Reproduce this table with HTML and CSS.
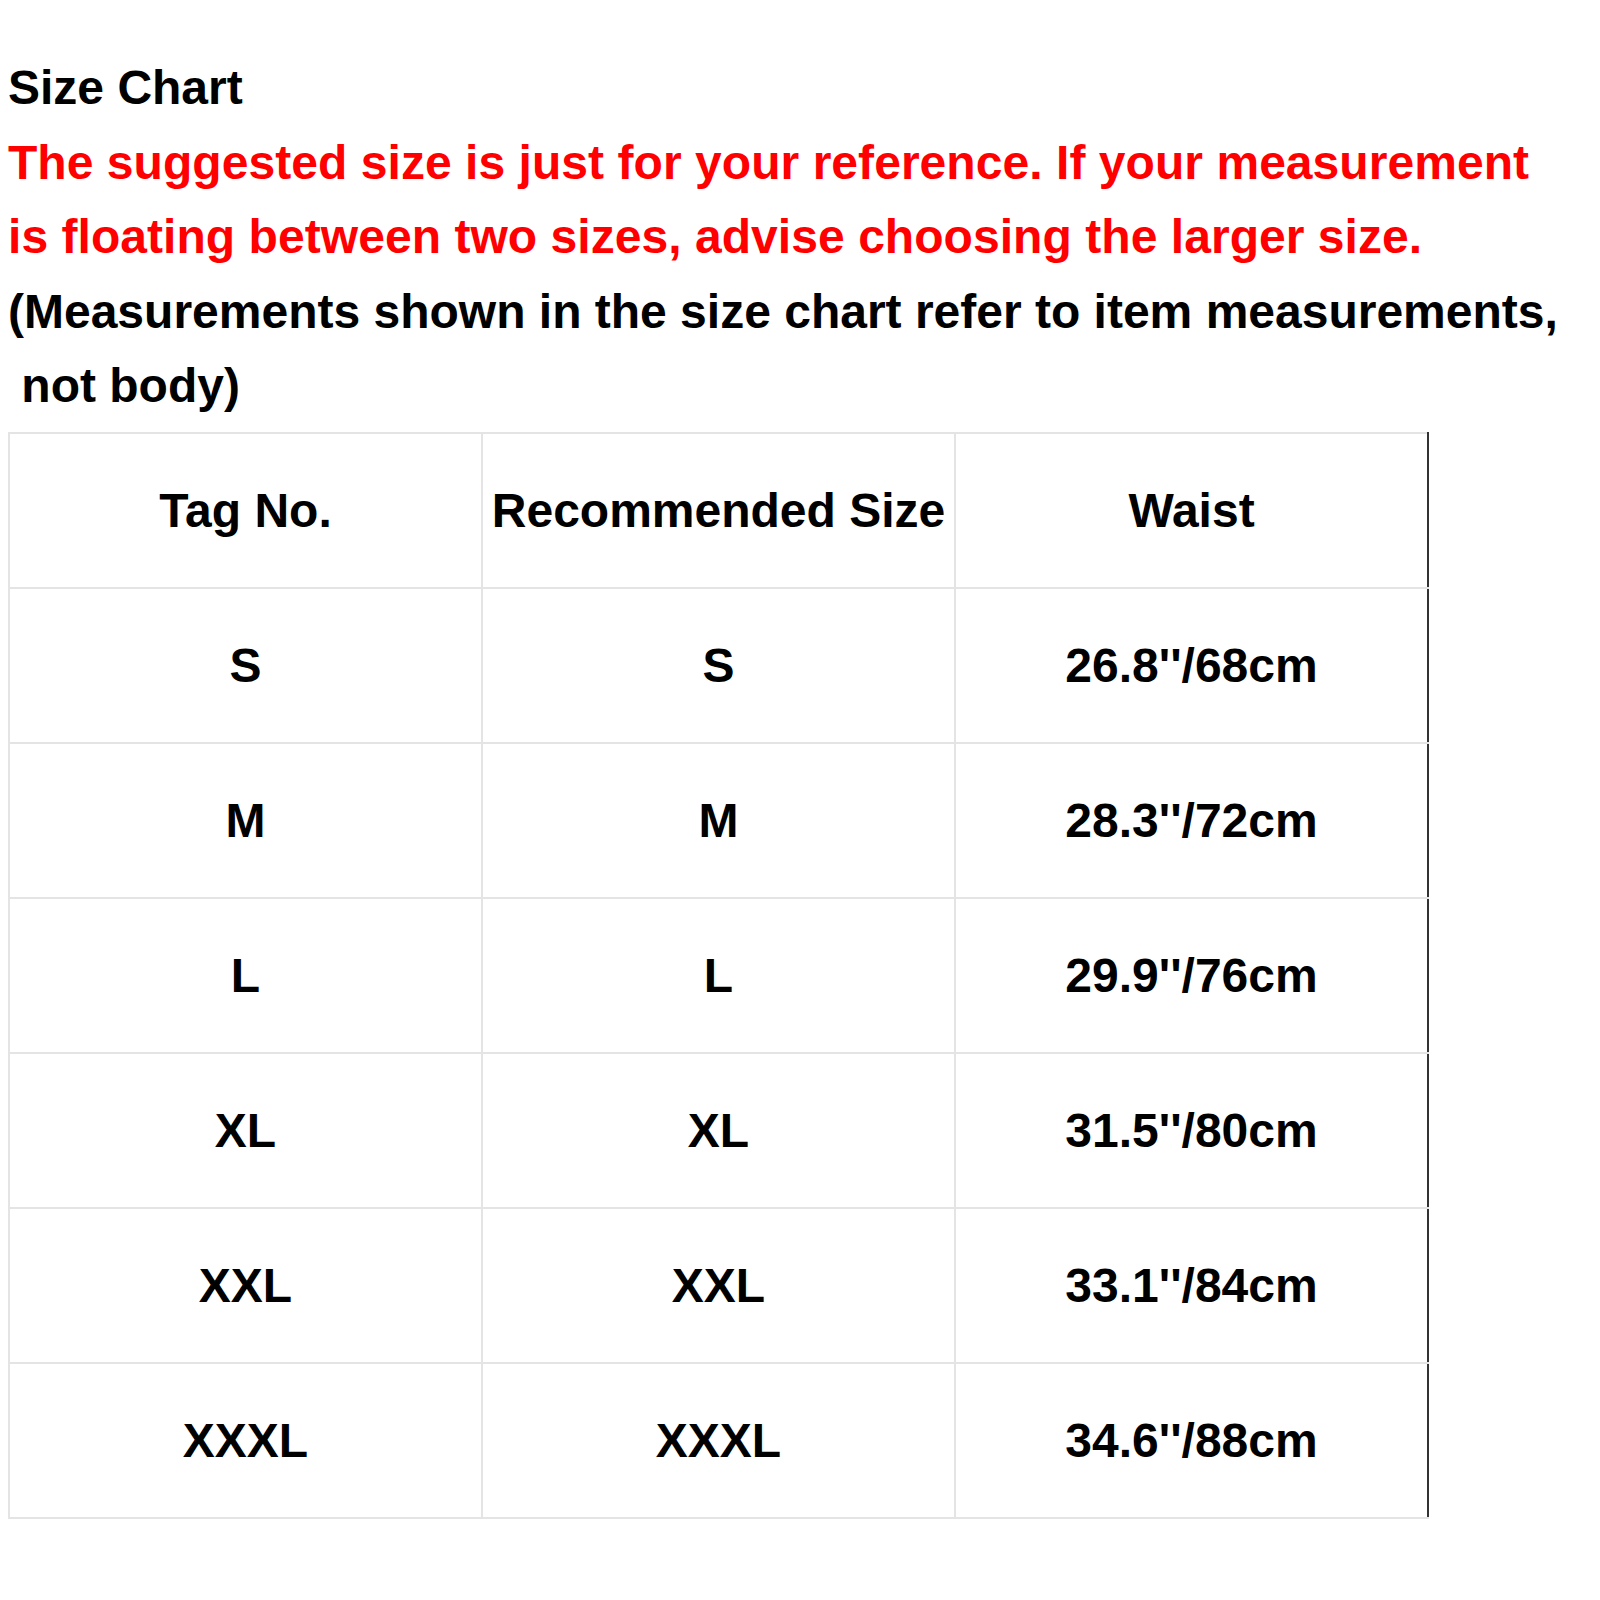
FILE: index.html
```html
<!DOCTYPE html>
<html>
<head>
<meta charset="utf-8">
<link rel="stylesheet" href="styles.css">
</head>
<body>
<div class="intro">
  <div class="line">Size Chart</div>
  <div class="line red">The suggested size is just for your reference. If your measurement</div>
  <div class="line red">is floating between two sizes, advise choosing the larger size.</div>
  <div class="line">(Measurements shown in the size chart refer to item measurements,</div>
  <div class="line">&nbsp;not body)</div>
</div>
<table class="chart">
  <tr><td>Tag No.</td><td>Recommended Size</td><td>Waist</td></tr>
  <tr><td>S</td><td>S</td><td>26.8''/68cm</td></tr>
  <tr><td>M</td><td>M</td><td>28.3''/72cm</td></tr>
  <tr><td>L</td><td>L</td><td>29.9''/76cm</td></tr>
  <tr><td>XL</td><td>XL</td><td>31.5''/80cm</td></tr>
  <tr><td>XXL</td><td>XXL</td><td>33.1''/84cm</td></tr>
  <tr><td>XXXL</td><td>XXXL</td><td>34.6''/88cm</td></tr>
</table>
</body>
</html>
```
FILE: styles.css
```css
html, body {
  background: #ffffff;
}
body {
  margin: 0;
  padding: 51px 8px 0 8px;
  font-family: "Liberation Sans", Arial, sans-serif;
  font-weight: bold;
  color: #000;
}
.intro {
  font-size: 48px;
  line-height: 74.5px;
  white-space: nowrap;
}
.red {
  color: #ff0000;
  letter-spacing: 0.05px;
}
.chart {
  margin-top: 8px;
  border-collapse: collapse;
  table-layout: fixed;
  width: 1421px;
  font-size: 48px;
}
.chart td {
  border: 2px solid #e4e4e4;
  height: 153px;
  padding: 0;
  text-align: center;
  vertical-align: middle;
  width: 33.33%;
  white-space: nowrap;
}
.chart td:last-child {
  border-right: 2px solid #333333;
}
```
